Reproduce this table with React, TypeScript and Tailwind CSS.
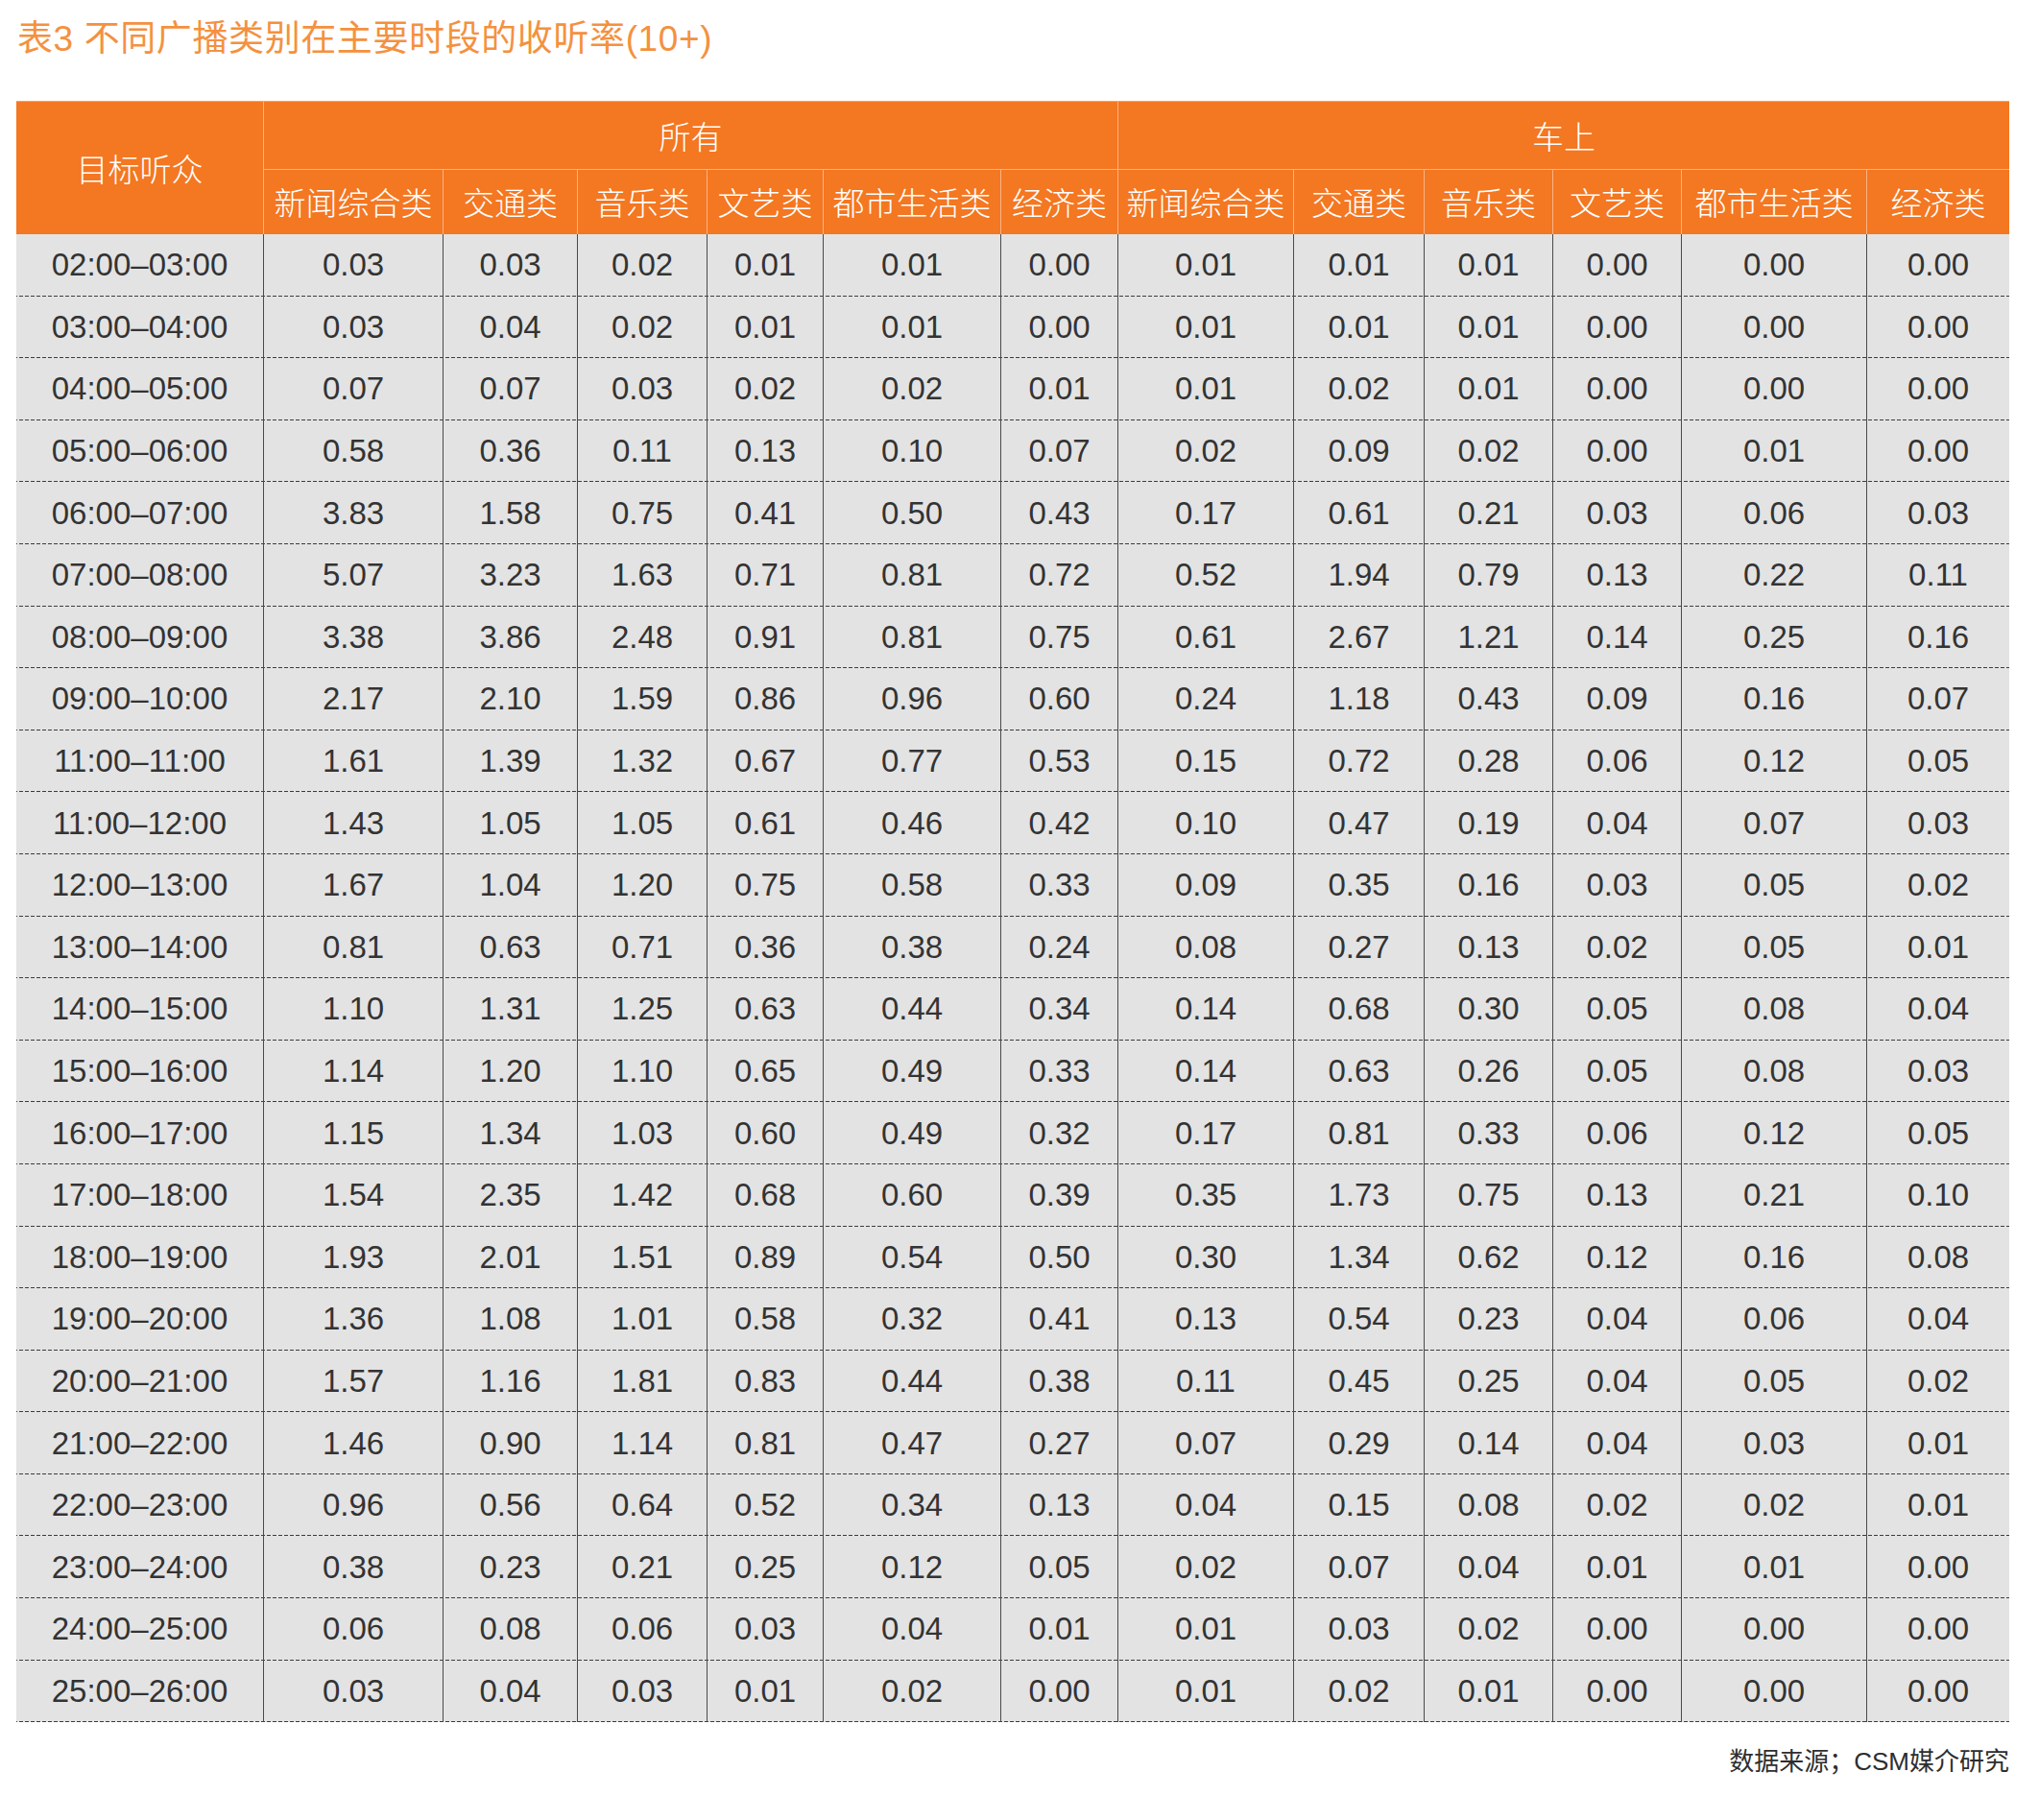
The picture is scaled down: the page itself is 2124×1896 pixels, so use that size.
const widths = [
  "w-[257px]",
  "w-[187px]",
  "w-[140px]",
  "w-[135px]",
  "w-[121px]",
  "w-[185px]",
  "w-[122px]",
  "w-[183px]",
  "w-[136px]",
  "w-[134px]",
  "w-[134px]",
  "w-[193px]",
  "w-[149px]",
];

const categories = ["新闻综合类", "交通类", "音乐类", "文艺类", "都市生活类", "经济类"];

const rows: [string, string][] = [
  ["02:00–03:00", "0.03 0.03 0.02 0.01 0.01 0.00 0.01 0.01 0.01 0.00 0.00 0.00"],
  ["03:00–04:00", "0.03 0.04 0.02 0.01 0.01 0.00 0.01 0.01 0.01 0.00 0.00 0.00"],
  ["04:00–05:00", "0.07 0.07 0.03 0.02 0.02 0.01 0.01 0.02 0.01 0.00 0.00 0.00"],
  ["05:00–06:00", "0.58 0.36 0.11 0.13 0.10 0.07 0.02 0.09 0.02 0.00 0.01 0.00"],
  ["06:00–07:00", "3.83 1.58 0.75 0.41 0.50 0.43 0.17 0.61 0.21 0.03 0.06 0.03"],
  ["07:00–08:00", "5.07 3.23 1.63 0.71 0.81 0.72 0.52 1.94 0.79 0.13 0.22 0.11"],
  ["08:00–09:00", "3.38 3.86 2.48 0.91 0.81 0.75 0.61 2.67 1.21 0.14 0.25 0.16"],
  ["09:00–10:00", "2.17 2.10 1.59 0.86 0.96 0.60 0.24 1.18 0.43 0.09 0.16 0.07"],
  ["11:00–11:00", "1.61 1.39 1.32 0.67 0.77 0.53 0.15 0.72 0.28 0.06 0.12 0.05"],
  ["11:00–12:00", "1.43 1.05 1.05 0.61 0.46 0.42 0.10 0.47 0.19 0.04 0.07 0.03"],
  ["12:00–13:00", "1.67 1.04 1.20 0.75 0.58 0.33 0.09 0.35 0.16 0.03 0.05 0.02"],
  ["13:00–14:00", "0.81 0.63 0.71 0.36 0.38 0.24 0.08 0.27 0.13 0.02 0.05 0.01"],
  ["14:00–15:00", "1.10 1.31 1.25 0.63 0.44 0.34 0.14 0.68 0.30 0.05 0.08 0.04"],
  ["15:00–16:00", "1.14 1.20 1.10 0.65 0.49 0.33 0.14 0.63 0.26 0.05 0.08 0.03"],
  ["16:00–17:00", "1.15 1.34 1.03 0.60 0.49 0.32 0.17 0.81 0.33 0.06 0.12 0.05"],
  ["17:00–18:00", "1.54 2.35 1.42 0.68 0.60 0.39 0.35 1.73 0.75 0.13 0.21 0.10"],
  ["18:00–19:00", "1.93 2.01 1.51 0.89 0.54 0.50 0.30 1.34 0.62 0.12 0.16 0.08"],
  ["19:00–20:00", "1.36 1.08 1.01 0.58 0.32 0.41 0.13 0.54 0.23 0.04 0.06 0.04"],
  ["20:00–21:00", "1.57 1.16 1.81 0.83 0.44 0.38 0.11 0.45 0.25 0.04 0.05 0.02"],
  ["21:00–22:00", "1.46 0.90 1.14 0.81 0.47 0.27 0.07 0.29 0.14 0.04 0.03 0.01"],
  ["22:00–23:00", "0.96 0.56 0.64 0.52 0.34 0.13 0.04 0.15 0.08 0.02 0.02 0.01"],
  ["23:00–24:00", "0.38 0.23 0.21 0.25 0.12 0.05 0.02 0.07 0.04 0.01 0.01 0.00"],
  ["24:00–25:00", "0.06 0.08 0.06 0.03 0.04 0.01 0.01 0.03 0.02 0.00 0.00 0.00"],
  ["25:00–26:00", "0.03 0.04 0.03 0.01 0.02 0.00 0.01 0.02 0.01 0.00 0.00 0.00"],
];

const cjk = "font-['Noto_Sans_CJK_SC','Noto_Sans',sans-serif]";
const latin = "font-['Liberation_Sans','Noto_Sans_CJK_SC',sans-serif]";

export default function App() {
  return (
    <div className="w-[2124px] h-[1896px] bg-white pl-[17px] flex flex-col">
      <div
        className={`h-[80px] flex items-center pl-[1px] text-[37px] leading-none tracking-[0.6px] text-[#f4913f] ${latin}`}
      >
        表3 不同广播类别在主要时段的收听率(10+)
      </div>

      <div className="mt-[25px] w-[2076px]">
        {/* header */}
        <div
          className={`grid grid-cols-[257px_187px_140px_135px_121px_185px_122px_183px_136px_134px_134px_193px_149px] grid-rows-[70px_68px] bg-[#f47721] border-t border-[#f8a467] text-white text-[33px] leading-none font-light ${cjk}`}
        >
          <div className="row-span-2 flex items-center justify-center">目标听众</div>
          <div className="col-span-6 flex items-center justify-center border-l border-[#f9b486]">所有</div>
          <div className="col-span-6 flex items-center justify-center border-l border-[#f9b486]">车上</div>
          {[...categories, ...categories].map((c, i) => (
            <div
              key={i}
              className="flex items-center justify-center border-l border-t border-[#f9b486] whitespace-nowrap"
            >
              {c}
            </div>
          ))}
        </div>

        {/* body */}
        <div className={`text-[33px] leading-none text-[#333333] ${latin}`}>
          {rows.map(([time, vals]) => {
            const cells = [time, ...vals.split(" ")];
            return (
              <div
                key={time}
                className="flex h-[64.6px] bg-[#e3e3e3] bg-[linear-gradient(to_right,#3c3c3c_0_4px,transparent_4px_6px)] bg-[length:6px_1px] bg-bottom bg-repeat-x"
              >
                {cells.map((v, i) => (
                  <div
                    key={i}
                    className={`${widths[i]} shrink-0 flex items-center justify-center pb-[1px] ${
                      i === 0 ? "" : "border-l border-[#4a4a4a]"
                    }`}
                  >
                    {v}
                  </div>
                ))}
              </div>
            );
          })}
        </div>
      </div>

      <div className="w-[2076px] mt-[28px] flex justify-end">
        <span className={`text-[26px] leading-none text-[#2e2e2e] ${latin}`}>数据来源；CSM媒介研究</span>
      </div>
    </div>
  );
}
